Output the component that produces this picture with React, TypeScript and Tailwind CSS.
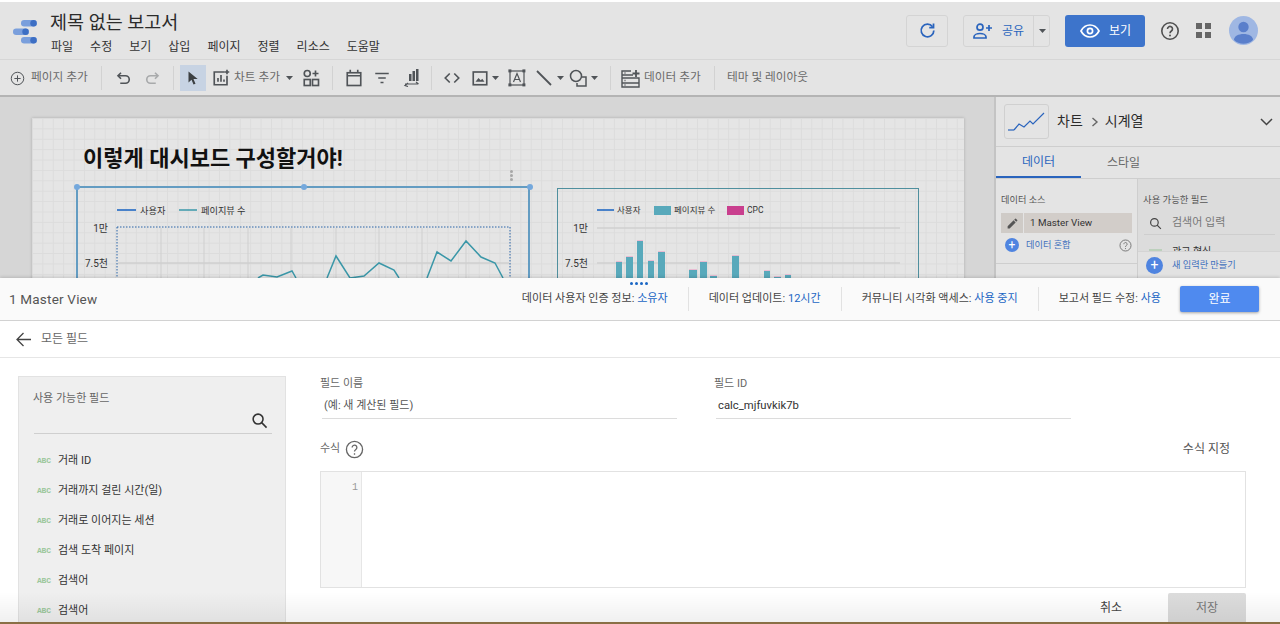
import type { ReactNode } from "react";

const ink = "#505458";

function Ico({ size = 18, className = "", children }: { size?: number; className?: string; children: ReactNode }) {
  return (
    <svg width={size} height={size} viewBox="0 0 24 24" fill="none" stroke={ink} strokeWidth="2.200" className={`shrink-0 ${className}`}>
      {children}
    </svg>
  );
}

function Caret({ className = "" }: { className?: string }) {
  return (
    <svg width="7" height="4" viewBox="0 0 7 4" className={`shrink-0 ${className}`}>
      <path d="M0 0h7L3.5 4z" fill={ink} />
    </svg>
  );
}

function Divider({ className = "" }: { className?: string }) {
  return <div className={`h-[24px] w-px shrink-0 bg-[#d2d2d2] ${className}`} />;
}

function Header() {
  return (
    <div className="flex h-[58px] shrink-0 items-center border-b border-[#d6d6d6] bg-[#e4e4e4]">
      <svg width="26" height="24" viewBox="0 0 26 24" className="ml-[12px] mt-[2px] shrink-0">
        <rect x="9" y="0" width="16" height="6.5" rx="3.2" fill="#7a9fdc" />
        <circle cx="21.5" cy="3.2" r="3.2" fill="#3d6fc4" />
        <rect x="1" y="8.5" width="16" height="6.5" rx="3.2" fill="#7a9fdc" />
        <circle cx="13.5" cy="11.7" r="3.2" fill="#3d6fc4" />
        <rect x="9" y="17" width="16" height="6.5" rx="3.2" fill="#7a9fdc" />
        <circle cx="21.5" cy="20.2" r="3.2" fill="#3d6fc4" />
      </svg>
      <div className="ml-[12px] mt-[5px] flex flex-col">
        <div className="text-[18.5px] leading-[26px] text-[#2b2b2b]">제목 없는 보고서</div>
        <div className="ml-px mt-[2px] flex gap-[17px] text-[12px] leading-[18px] text-[#333]">
          <span>파일</span>
          <span>수정</span>
          <span>보기</span>
          <span>삽입</span>
          <span>페이지</span>
          <span>정렬</span>
          <span>리소스</span>
          <span>도움말</span>
        </div>
      </div>
      <div className="ml-auto flex items-center pr-[22px]">
        <div className="flex h-[32px] w-[42px] items-center justify-center rounded-[3px] border border-[#d4d4d4]">
          <svg width="19" height="19" viewBox="0 0 24 24" fill="none" stroke="#2a64bd" strokeWidth="2.2">
            <path d="M18.4 7.2A8 8 0 1 0 20 12" />
            <path d="M19.6 3v5.4h-5.4" />
          </svg>
        </div>
        <div className="ml-[15px] flex h-[32px] w-[87px] items-center rounded-[3px] border border-[#d4d4d4]">
          <div className="flex h-full w-[70px] items-center border-r border-[#d4d4d4] pl-[9px] text-[12px] text-[#2a64bd]">
            <svg width="20" height="16" viewBox="0 0 20 16" fill="none" stroke="#2a64bd" strokeWidth="1.7" className="shrink-0">
              <circle cx="7" cy="4.2" r="3" />
              <path d="M1 15v-1.2c0-2 3-3.3 6-3.3s6 1.300 6 3.300V15z" />
              <path d="M16 2v6M13 5h6" />
            </svg>
            <span className="ml-[9px]">공유</span>
          </div>
          <Caret className="ml-[5px]" />
        </div>
        <div className="ml-[15px] flex h-[32px] w-[80px] items-center rounded-[3px] bg-[#3d74cb] pl-[15px] text-[12px] text-white">
          <svg width="20" height="14" viewBox="0 0 20 14" fill="none" stroke="#fff" strokeWidth="1.7" className="shrink-0">
            <path d="M1 7c2-3.800 5.200-6 9-6s7 2.200 9 6c-2 3.800-5.200 6-9 6s-7-2.200-9-6z" />
            <circle cx="10" cy="7" r="2.600" />
          </svg>
          <span className="ml-[9px]">보기</span>
        </div>
        <svg width="20" height="20" viewBox="0 0 20 20" fill="none" className="ml-[15px] shrink-0">
          <circle cx="10" cy="10" r="8.200" stroke="#505050" strokeWidth="1.600" />
          <path d="M7.500 8a2.500 2.500 0 1 1 3.900 2c-.9.6-1.400 1-1.400 2.200" stroke="#505050" strokeWidth="1.600" />
          <circle cx="10" cy="14.500" r="1" fill="#505050" />
        </svg>
        <div className="ml-[16px] grid shrink-0 grid-cols-2 gap-[3px]">
          <div className="h-[6px] w-[6px] bg-[#666]" />
          <div className="h-[6px] w-[6px] bg-[#666]" />
          <div className="h-[6px] w-[6px] bg-[#666]" />
          <div className="h-[6px] w-[6px] bg-[#666]" />
        </div>
        <svg width="29" height="29" viewBox="0 0 29 29" className="ml-[18px] shrink-0">
          <circle cx="14.500" cy="14.500" r="14.500" fill="#9fb7e3" />
          <circle cx="14.500" cy="11" r="5.200" fill="#5a7fcb" />
          <path d="M5 24c0-4 4.500-6 9.500-6s9.500 2 9.500 6a14 14 0 0 1-19 0z" fill="#5a7fcb" />
        </svg>
      </div>
    </div>
  );
}

function Toolbar() {
  return (
    <div className="flex h-[37px] shrink-0 items-center border-b-2 border-[#b4b4b4] bg-[#e4e4e4] pl-[10px] pt-px text-[11.7px] text-[#6a6a6a]">
      <Ico size={15}>
        <circle cx="12" cy="12" r="10" strokeWidth="1.600" />
        <path d="M12 7v10M7 12h10" strokeWidth="1.600" />
      </Ico>
      <span className="ml-[6px] w-[57px] whitespace-nowrap">페이지 추가</span>
      <Divider className="ml-[13px]" />
      <Ico className="ml-[13px]">
        <path d="M8 5 4 9l4 4" />
        <path d="M4 9h10a5 5 0 0 1 0 10H7" />
      </Ico>
      <Ico className="ml-[10px] opacity-40">
        <path d="m16 5 4 4-4 4" />
        <path d="M20 9H10a5 5 0 0 0 0 10h7" />
      </Ico>
      <Divider className="ml-[12px]" />
      <div className="ml-[6px] flex h-[26px] w-[26px] shrink-0 items-center justify-center bg-[#c7d3e3]">
        <svg width="12" height="14" viewBox="0 0 12 14">
          <path d="M1.500 0.500v11l3-2.800 2 4.800 2-.8-2-4.700h4.200z" fill="#3c4043" />
        </svg>
      </div>
      <Ico className="ml-[6px]">
        <path d="M17 4H3v17h17V9" />
        <path d="M8 17v-5M12 17V8M16 17v-3" />
        <path d="M20 1v6M17 4h6" />
      </Ico>
      <span className="ml-[4px] w-[48px] whitespace-nowrap">차트 추가</span>
      <Caret className="ml-[4px]" />
      <Ico className="ml-[9px]">
        <circle cx="7" cy="6" r="4" />
        <path d="M18 2v8M14 6h8" />
        <rect x="3" y="14" width="8" height="8" />
        <rect x="14" y="14" width="8" height="8" />
      </Ico>
      <Divider className="ml-[12px]" />
      <Ico className="ml-[12px]">
        <rect x="3" y="5" width="18" height="17" />
        <path d="M3 9h18M7 1v4M17 1v4" />
      </Ico>
      <Ico className="ml-[10px]">
        <path d="M3 6h18M7 12h10M10 18h4" />
      </Ico>
      <svg width="18" height="18" viewBox="0 0 18 18" className="ml-[12px] shrink-0" fill={ink}>
        <rect x="6" y="5" width="2.500" height="7" />
        <rect x="9.500" y="2" width="2.500" height="10" />
        <rect x="13" y="0" width="2.500" height="12" />
        <path d="M2 15h13M13 13l2.500 2M5 14l-3 2.500 3 1" stroke={ink} fill="none" strokeWidth="1.200" />
      </svg>
      <Divider className="ml-[10px]" />
      <Ico className="ml-[11px]">
        <path d="M9 6 3 12l6 6M15 6l6 6-6 6" />
      </Ico>
      <Ico className="ml-[10px]">
        <rect x="3" y="4" width="18" height="17" />
        <path d="m6 17 4-5 3 3 2-2 3 4z" fill={ink} stroke="none" />
      </Ico>
      <Caret className="ml-[3px]" />
      <svg width="18" height="18" viewBox="0 0 18 18" fill="none" stroke={ink} strokeWidth="1.200" className="ml-[9px] shrink-0">
        <rect x="2" y="2" width="14" height="14" />
        <rect x="1" y="1" width="1.800" height="1.800" fill={ink} />
        <rect x="15" y="1" width="1.800" height="1.800" fill={ink} />
        <rect x="1" y="15" width="1.800" height="1.800" fill={ink} />
        <rect x="15" y="15" width="1.800" height="1.800" fill={ink} />
        <path d="m5.500 13 3.500-8.500 3.500 8.500M6.800 10.500h4.400" />
      </svg>
      <svg width="18" height="18" viewBox="0 0 18 18" fill="none" stroke={ink} strokeWidth="1.800" className="ml-[9px] shrink-0">
        <path d="m2 2 14 14" />
      </svg>
      <Caret className="ml-[4px]" />
      <svg width="18" height="18" viewBox="0 0 18 18" fill="none" stroke={ink} strokeWidth="1.500" className="ml-[5px] shrink-0">
        <circle cx="7" cy="7" r="5.500" />
        <path d="M13 8h4v9H8v-3" />
      </svg>
      <Caret className="ml-[4px]" />
      <Divider className="ml-[12px]" />
      <svg width="19" height="19" viewBox="0 0 19 19" fill="none" stroke={ink} strokeWidth="1.400" className="ml-[10px] shrink-0">
        <path d="M10 2H1v16h17v-9H1M1 6h11M1 14h17" />
        <path d="M15 1v7M11.500 4.500h7" strokeWidth="1.800" />
        <path d="M3.500 4h1M3.500 11.500h1M3.500 16h1" />
      </svg>
      <span className="ml-[4px] w-[57px] whitespace-nowrap">데이터 추가</span>
      <Divider className="ml-[13px]" />
      <span className="ml-[12px] whitespace-nowrap">테마 및 레이아웃</span>
    </div>
  );
}

function LineChart() {
  const gridX = [161, 204, 248, 291, 336, 379, 422, 466];
  return (
    <div className="relative h-[110px] w-[454px] shrink-0 border-2 border-b-0 border-[#639cc2]">
      <svg width="450" height="108" viewBox="78 188 450 108" className="block">
        <path d="M117 227H510M117 227V290M510 227V290" stroke="#2a64a8" strokeDasharray="1.500 1.500" fill="none" />
        {gridX.map((x) => (
          <path key={x} d={`M${x} 228V290`} stroke="#cfcfcf" />
        ))}
        <path d="M118 263H509" stroke="#cfcfcf" strokeWidth="1.500" />
        <path d="M117 210h19" stroke="#1560c0" strokeWidth="1.500" />
        <text x="140" y="213.500" fontSize="9.200" fill="#333">사용자</text>
        <path d="M179 210h18" stroke="#3a97a8" strokeWidth="1.500" />
        <text x="201" y="213.500" fontSize="9.200" fill="#333">페이지뷰 수</text>
        <text x="108" y="231.500" fontSize="10" fill="#333" textAnchor="end">1만</text>
        <text x="108" y="266.500" fontSize="10" fill="#333" textAnchor="end">7.5천</text>
        <path
          d="M258 278 263 275 277 277 292 271 296 278M327 278 336 256 350 278 364 276 379 263 394 270 399 278M427 278 437 252 451 261 466 241 481 257 495 263 503 278"
          fill="none"
          stroke="#3a97a8"
          strokeWidth="1.500"
        />
      </svg>
      <div className="absolute left-[-4px] top-[-4px] h-[6px] w-[6px] rounded-full bg-[#74a8dc]" />
      <div className="absolute left-[223px] top-[-4px] h-[6px] w-[6px] rounded-full bg-[#74a8dc]" />
      <div className="absolute right-[-5px] top-[-4px] h-[6px] w-[6px] rounded-full bg-[#74a8dc]" />
      <div className="absolute right-[15px] top-[-18px] flex flex-col gap-[1px]">
        <div className="h-[3px] w-[3px] rounded-full bg-[#a8a8a8]" />
        <div className="h-[3px] w-[3px] rounded-full bg-[#a8a8a8]" />
        <div className="h-[3px] w-[3px] rounded-full bg-[#a8a8a8]" />
      </div>
    </div>
  );
}

function BarChart() {
  const bars = [
    [616, 262, 6],
    [626, 257, 7],
    [637, 241, 6],
    [648, 261, 6],
    [658, 252, 7],
    [689, 270, 8],
    [700, 262, 7],
    [710, 276, 7],
    [732, 256, 7],
    [764, 271, 6],
    [774, 277, 7],
    [785, 275, 6],
  ];
  return (
    <div className="ml-[27px] mt-[2px] h-[108px] w-[362px] shrink-0 border border-b-0 border-[#4f8f9e]">
      <svg width="360" height="107" viewBox="558 189 360 107" className="block">
        <path d="M597 210h17" stroke="#1560c0" strokeWidth="1.500" />
        <text x="617" y="213" fontSize="8.500" fill="#333">사용자</text>
        <rect x="654" y="206" width="17" height="9" fill="#58a9bb" />
        <text x="674" y="213" fontSize="8.500" fill="#333">페이지뷰 수</text>
        <rect x="727" y="206" width="17" height="9" fill="#c93f8e" />
        <text x="747" y="213" fontSize="8.500" fill="#333">CPC</text>
        <text x="588" y="231.500" fontSize="10" fill="#333" textAnchor="end">1만</text>
        <text x="588" y="266.500" fontSize="10" fill="#333" textAnchor="end">7.5천</text>
        <path d="M597 228H900M597 263H900" stroke="#cfcfcf" strokeWidth="1.500" />
        {bars.map(([x, y, w]) => (
          <g key={x}>
            <rect x={x} y={y} width={w} height={296 - y} fill="#58a9bb" />
            <rect x={x} y={y - 1} width={w} height="1" fill="#e8bcd2" />
          </g>
        ))}
      </svg>
    </div>
  );
}

function Canvas() {
  return (
    <div className="flex min-w-0 flex-1 overflow-hidden bg-[#d6d6d6] pl-[32px] pt-[21px]">
      <div className="h-[200px] w-[932px] shrink-0 bg-[#e5e5e5] bg-[linear-gradient(#dcdcdc_1px,transparent_1px),linear-gradient(90deg,#dcdcdc_1px,transparent_1px)] bg-[size:10.400px_10.400px] shadow-[0_0_3px_rgba(0,0,0,0.2)]">
        <div className="ml-[51px] mt-[24px] text-[22px] font-bold leading-[34px] text-[#111]">이렇게 대시보드 구성할거야!</div>
        <div className="ml-[44px] mt-[10px] flex items-start">
          <LineChart />
          <BarChart />
        </div>
      </div>
    </div>
  );
}

function SidePanel() {
  return (
    <div className="flex w-[286px] shrink-0 flex-col overflow-hidden border-l-2 border-[#c4c4c4] bg-[#e4e4e4]">
      <div className="flex h-[50px] shrink-0 items-center border-b border-[#cecece] pl-[8px]">
        <div className="flex h-[35px] w-[45px] items-center justify-center rounded-[3px] border border-[#d0d0d0]">
          <svg width="37" height="20" viewBox="0 0 37 20" fill="none" strokeWidth="1.200">
            <path d="M0 18h6" stroke="#2a64bd" />
            <path d="M6 18 11 12 16 15 22 9 25 12 36 1" stroke="#2a64bd" />
          </svg>
        </div>
        <span className="ml-[8px] text-[14px] text-[#2b2b2b]">차트</span>
        <svg width="8" height="10" viewBox="0 0 8 10" fill="none" stroke="#666" strokeWidth="1.400" className="ml-[8px]">
          <path d="m1.500 1 4.500 4-4.500 4" />
        </svg>
        <span className="ml-[6px] text-[14px] text-[#2b2b2b]">시계열</span>
        <svg width="13" height="8" viewBox="0 0 13 8" fill="none" stroke="#444" strokeWidth="1.500" className="ml-auto mr-[7px]">
          <path d="m1 1 5.500 5.500L12 1" />
        </svg>
      </div>
      <div className="flex h-[32px] shrink-0 border-b border-[#cecece] text-[12px]">
        <div className="flex w-[85px] items-center justify-center border-b-2 border-[#2a64bd] text-[#2a64bd]">데이터</div>
        <div className="flex w-[85px] items-center justify-center text-[#666]">스타일</div>
      </div>
      <div className="flex min-h-0 flex-1">
        <div className="w-[142px] shrink-0 border-r border-[#cecece] pt-[14px]">
          <div className="ml-[5px] text-[9.200px] leading-[14px] text-[#555]">데이터 소스</div>
          <div className="ml-[5px] mt-[6px] flex h-[20px] w-[131px]">
            <div className="flex w-[22px] items-center justify-center bg-[#cfcbc7]">
              <svg width="13" height="13" viewBox="0 0 24 24" fill="#555">
                <path d="M3 17.250V21h3.750L17.800 9.940l-3.750-3.750zM20.700 7.040a1 1 0 0 0 0-1.410l-2.340-2.340a1 1 0 0 0-1.410 0l-1.830 1.830 3.750 3.750z" />
              </svg>
            </div>
            <div className="ml-px flex flex-1 items-center bg-[#d2cdc9] pl-[6px] text-[9.800px] text-[#333]">1 Master View</div>
          </div>
          <div className="ml-[9px] mt-[5px] flex items-center">
            <div className="flex h-[14px] w-[14px] items-center justify-center rounded-full bg-[#4f84e0] text-[12px] leading-none text-white">+</div>
            <span className="ml-[7px] text-[9.200px] text-[#4170bd]">데이터 혼합</span>
            <svg width="13" height="13" viewBox="0 0 20 20" fill="none" stroke="#777" strokeWidth="1.500" className="ml-[48px]">
              <circle cx="10" cy="10" r="8.500" />
              <path d="M7.500 8a2.500 2.500 0 1 1 3.900 2c-.9.6-1.400 1-1.400 2.200M10 14v1.500" />
            </svg>
          </div>
          <div className="mt-[11px] border-t border-[#cecece]" />
        </div>
        <div className="relative min-w-0 flex-1 bg-[#dcdcdc] pt-[14px]">
          <div className="ml-[5px] text-[9.400px] leading-[14px] text-[#555]">사용 가능한 필드</div>
          <div className="ml-[6px] mr-[5px] mt-[6px] flex h-[22px] items-center border-b border-[#cecece] pl-[5px] text-[11px] text-[#777]">
            <svg width="13" height="13" viewBox="0 0 24 24" fill="none" stroke="#444" strokeWidth="2.200" className="shrink-0">
              <circle cx="10" cy="10" r="7" />
              <path d="m15 15 7 7" />
            </svg>
            <span className="ml-[10px]">검색어 입력</span>
          </div>
          <div className="mt-[9px] flex items-center pl-[11px] text-[10px] text-[#333]">
            <div className="h-[6px] w-[13px] bg-[#bcd0bc]" />
            <span className="ml-[10px]">광고 형식</span>
          </div>
          <div className="absolute bottom-0 left-0 right-0 flex h-[27px] items-center border-t border-[#d4d4d4] bg-[#e2e2e2] pl-[8px]">
            <div className="flex h-[17px] w-[17px] items-center justify-center rounded-full bg-[#4f84e0] text-[14px] leading-none text-white">+</div>
            <span className="ml-[9px] text-[9.200px] text-[#4170bd]">새 입력란 만들기</span>
          </div>
        </div>
      </div>
    </div>
  );
}

function SheetHeader() {
  return (
    <div className="flex h-[43px] shrink-0 items-center border-b border-[#d2d2d2] bg-[#fafafa] pl-[9px] pr-[21px] text-[11.050px] text-[#444]">
      <span className="text-[13.500px] tracking-[0.2px] text-[#555]">1 Master View</span>
      <div className="ml-auto flex items-center">
        <div className="border-r border-[#e2e2e2] pr-[20px] leading-[24px]">
          데이터 사용자 인증 정보: <span className="text-[#1a66c4]">소유자</span>
        </div>
        <div className="border-r border-[#e2e2e2] px-[20px] leading-[24px]">
          데이터 업데이트: <span className="text-[#1a66c4]">12시간</span>
        </div>
        <div className="border-r border-[#e2e2e2] px-[20px] leading-[24px]">
          커뮤니티 시각화 액세스: <span className="text-[#1a66c4]">사용 중지</span>
        </div>
        <div className="pl-[20px] leading-[24px]">
          보고서 필드 수정: <span className="text-[#1a66c4]">사용</span>
        </div>
        <div className="ml-[19px] flex h-[26px] w-[79px] items-center justify-center rounded-[2px] bg-[#4f8aef] text-[12px] text-white shadow-[0_1px_3px_rgba(0,0,0,0.35)]">
          완료
        </div>
      </div>
    </div>
  );
}

function FieldList() {
  const fields = ["거래 ID", "거래까지 걸린 시간(일)", "거래로 이어지는 세션", "검색 도착 페이지", "검색어", "검색어"];
  return (
    <div className="ml-[18px] mt-[18px] h-[260px] w-[268px] shrink-0 border border-[#e2e2e2] bg-[#efefef]">
      <div className="ml-[14px] mt-[14px] text-[11px] leading-[16px] text-[#666]">사용 가능한 필드</div>
      <div className="ml-[15px] mr-[13px] flex h-[27px] items-center justify-end border-b border-[#cfcfcf] pr-[4px]">
        <svg width="17" height="17" viewBox="0 0 24 24" fill="none" stroke="#333" strokeWidth="2.200">
          <circle cx="10" cy="10" r="7" />
          <path d="m15 15 7 7" />
        </svg>
      </div>
      <div className="mt-[12px] flex flex-col">
        {fields.map((f, i) => (
          <div key={i} className="flex h-[30px] items-center pl-[18px]">
            <span className="w-[19px] font-['Liberation_Mono',monospace] text-[8px] font-bold tracking-[-0.2px] text-[#9cc79c]">ABC</span>
            <span className="ml-[2px] text-[11px] text-[#333]">{f}</span>
          </div>
        ))}
      </div>
    </div>
  );
}

function FieldEditor() {
  return (
    <div className="ml-[34px] mt-[18px] flex w-[926px] shrink-0 flex-col">
      <div className="flex">
        <div className="w-[394px]">
          <div className="text-[11px] leading-[16px] text-[#666]">필드 이름</div>
          <div className="ml-[2px] mt-[2px] h-[25px] w-[355px] border-b border-[#dcdcdc] pl-[2px] text-[11px] leading-[24px] text-[#555]">(예: 새 계산된 필드)</div>
        </div>
        <div>
          <div className="text-[11px] leading-[16px] text-[#666]">필드 ID</div>
          <div className="ml-[2px] mt-[2px] h-[25px] w-[355px] border-b border-[#dcdcdc] pl-[2px] text-[11.300px] leading-[24px] text-[#333]">calc_mjfuvkik7b</div>
        </div>
      </div>
      <div className="mt-[18px] flex h-[24px] items-center text-[11px] text-[#666]">
        <span>수식</span>
        <svg width="19" height="19" viewBox="0 0 20 20" fill="none" stroke="#666" strokeWidth="1.400" className="ml-[5px]">
          <circle cx="10" cy="10" r="8.500" />
          <path d="M7.500 8a2.500 2.500 0 1 1 3.900 2c-.9.6-1.400 1-1.400 2.200M10 14v1.500" />
        </svg>
        <span className="ml-auto mr-[16px] text-[12px] text-[#555]">수식 지정</span>
      </div>
      <div className="mt-[10px] flex h-[117px] border border-[#e2e2e2] bg-white">
        <div className="w-[41px] border-r border-[#e6e6e6] bg-[#f7f7f7] pr-[3px] pt-[8px] text-right font-['Liberation_Mono',monospace] text-[10px] leading-[16px] text-[#999]">1</div>
      </div>
      <div className="mt-[5px] flex items-center justify-end text-[12px]">
        <span className="mr-[46px] text-[#444]">취소</span>
        <div className="flex h-[30px] w-[78px] items-center justify-center rounded-t-[2px] bg-[#dcdcdc] text-[#777]">저장</div>
      </div>
    </div>
  );
}

export default function App() {
  return (
    <div className="relative flex h-[624px] w-[1280px] flex-col overflow-hidden bg-white pt-[2px] [font-family:Roboto,'Noto_Sans_CJK_KR',sans-serif]">
      <Header />
      <Toolbar />
      <div className="flex h-[181px] shrink-0">
        <Canvas />
        <SidePanel />
      </div>
      <div className="relative flex min-h-0 flex-1 flex-col bg-white shadow-[0_-1px_3px_rgba(0,0,0,0.15)]">
        <div className="absolute left-[630px] top-[4px] flex gap-[2px]">
          <div className="h-[3px] w-[3px] rounded-full bg-[#1a66c4]" />
          <div className="h-[3px] w-[3px] rounded-full bg-[#1a66c4]" />
          <div className="h-[3px] w-[3px] rounded-full bg-[#1a66c4]" />
          <div className="h-[3px] w-[3px] rounded-full bg-[#1a66c4]" />
        </div>
        <SheetHeader />
        <div className="flex h-[37px] shrink-0 items-center border-b border-[#e6e6e6] pl-[16px] text-[12px] text-[#666]">
          <svg width="15" height="15" viewBox="0 0 15 15" fill="none" stroke="#444" strokeWidth="1.300">
            <path d="M15 7.500H1M7.500 1 1 7.500 7.500 14" />
          </svg>
          <span className="ml-[10px]">모든 필드</span>
        </div>
        <div className="flex min-h-0 flex-1 items-start">
          <FieldList />
          <FieldEditor />
        </div>
      </div>
      <div className="pointer-events-none absolute bottom-[2px] left-0 right-0 h-[30px] bg-gradient-to-b from-transparent to-[rgba(0,0,0,0.06)]" />
      <div className="absolute bottom-0 left-0 right-0 h-[2px] bg-[#8a6f45]" />
    </div>
  );
}
